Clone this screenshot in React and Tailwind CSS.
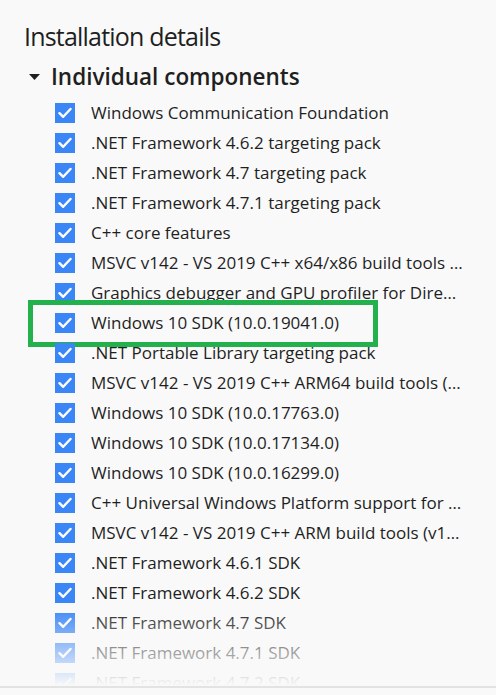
import React from 'react';

const components = [
  'Windows Communication Foundation',
  '.NET Framework 4.6.2 targeting pack',
  '.NET Framework 4.7 targeting pack',
  '.NET Framework 4.7.1 targeting pack',
  'C++ core features',
  'MSVC v142 - VS 2019 C++ x64/x86 build tools (v14.27)',
  'Graphics debugger and GPU profiler for DirectX',
  'Windows 10 SDK (10.0.19041.0)',
  '.NET Portable Library targeting pack',
  'MSVC v142 - VS 2019 C++ ARM64 build tools (v14.27)',
  'Windows 10 SDK (10.0.17763.0)',
  'Windows 10 SDK (10.0.17134.0)',
  'Windows 10 SDK (10.0.16299.0)',
  'C++ Universal Windows Platform support for v142 build tools',
  'MSVC v142 - VS 2019 C++ ARM build tools (v14.27)',
  '.NET Framework 4.6.1 SDK',
  '.NET Framework 4.6.2 SDK',
  '.NET Framework 4.7 SDK',
  '.NET Framework 4.7.1 SDK',
  '.NET Framework 4.7.2 SDK',
  '.NET Framework 4.8 SDK',
];

const CheckBox = () => (
  <span className="flex h-5 w-5 shrink-0 items-center justify-center bg-[#3b86f7]">
    <svg width="14" height="12" viewBox="0 0 14 12" fill="none">
      <path d="M1.5 6.2 L5.2 9.8 L12.5 2" stroke="white" strokeWidth="2.4" strokeLinecap="round" strokeLinejoin="round" />
    </svg>
  </span>
);

const Row = ({ label, highlighted }) => (
  <div className="relative flex h-[30px] items-center pl-[55px]">
    {highlighted && (
      <div className="absolute left-[28px] top-[-8px] h-[47px] w-[350px] border-[5px] border-[#22b14c]" />
    )}
    <CheckBox />
    <span className="ml-4 w-[372px] truncate text-[17px] text-[#1f1f1f]">{label}</span>
  </div>
);

export default function App() {
  return (
    <div
      className="relative h-[695px] w-[496px] overflow-hidden bg-[#f9f9f9]"
      style={{ fontFamily: '"Open Sans", "Noto Sans", sans-serif' }}
    >
      <h1 className="pl-[24px] pt-[18px] text-[25px] leading-[36px] tracking-[-0.8px] text-[#1f1f1f]">
        Installation details
      </h1>
      <div className="mt-[7px] flex items-center pl-[29px]">
        <svg width="11" height="6" viewBox="0 0 11 6">
          <path d="M0 0 H11 L5.5 6 Z" fill="#1f1f1f" />
        </svg>
        <h2 className="ml-[11px] text-[22.5px] font-semibold leading-[32px] text-[#1f1f1f]">
          Individual components
        </h2>
      </div>
      <div className="mt-[5px]">
        {components.map((c, i) => (
          <Row key={i} label={c} highlighted={i === 7} />
        ))}
      </div>
      <div className="absolute bottom-[9px] left-0 h-[80px] w-full bg-gradient-to-b from-[#f9f9f9]/0 to-[#f9f9f9]" />
      <div className="absolute bottom-0 left-0 h-[9px] w-full border-t-2 border-[#e3e3e3] bg-[#f9f9f9]" />
    </div>
  );
}
